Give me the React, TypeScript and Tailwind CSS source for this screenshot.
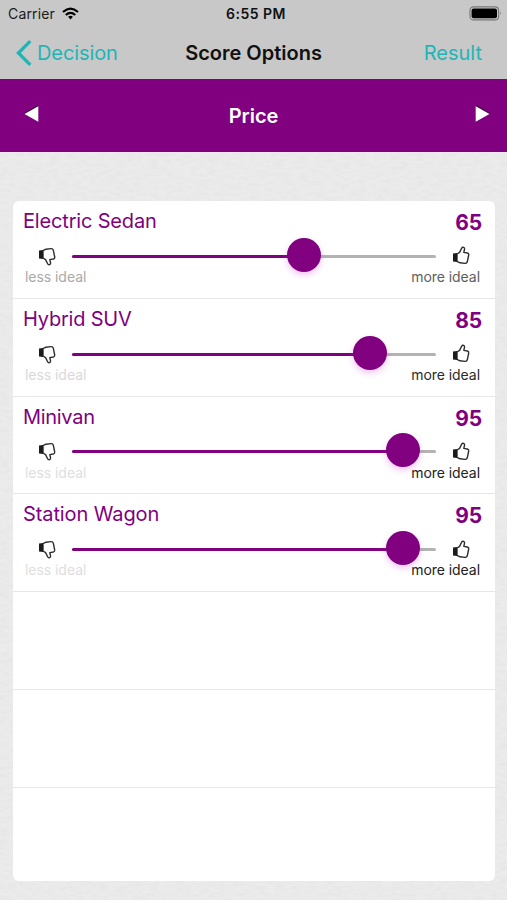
const options = [
  { name: 'Electric Sedan', score: 65, less: 'text-[#a9a9a9]', more: 'text-[#5e5e5e]', spacing: 'tracking-[-0.17px]' },
  { name: 'Hybrid SUV', score: 85, less: 'text-[#d9d9d9]', more: 'text-[#2b2b2b]', spacing: 'tracking-[-0.2px]' },
  { name: 'Minivan', score: 95, less: 'text-[#dedede]', more: 'text-[#222222]', spacing: 'tracking-[-0.3px]' },
  { name: 'Station Wagon', score: 95, less: 'text-[#dedede]', more: 'text-[#222222]', spacing: 'tracking-[-0.1px]' },
];

function Thumb({ down = false }: { down?: boolean }) {
  return (
    <svg viewBox="0 0 18 19" className={down ? 'h-[19px] w-[18px] -scale-y-100' : 'h-[19px] w-[18px]'} fill="none">
      <path
        d="M5 8 L7.6 6.4 L9.6 2.3 Q10.3 .9 11.6 1.3 Q12.9 1.8 12.5 3.5 L11.8 6.4 L15.3 7 Q17 7.4 16.7 9 L15.3 15.8 Q14.8 17.6 13 17.4 L8 16.8 L5 15.4 Z"
        stroke="#2e2e2e"
        strokeWidth="1.4"
        strokeLinejoin="round"
      />
      <path d="M1 7.4 L5 7.1 V16 L1 15.6 Z" fill="#1c1c1c" />
    </svg>
  );
}

function Grain() {
  return (
    <svg className="pointer-events-none absolute inset-0 size-full" aria-hidden="true">
      <filter id="grain">
        <feTurbulence type="fractalNoise" baseFrequency="0.12 0.3" numOctaves="3" seed="4" />
        <feColorMatrix values="0 0 0 0 0.5  0 0 0 0 0.5  0 0 0 0 0.5  0.22 0 0 0 -0.08" />
      </filter>
      <rect width="100%" height="100%" filter="url(#grain)" />
    </svg>
  );
}

function OptionRow({ option }: { option: (typeof options)[number] }) {
  return (
    <div className="h-[97.8px] border-b border-[#e7e7e7] pl-[10px] pr-[13px] pt-[6px]">
      <div className="flex h-[28px] items-start justify-between text-[#800080]">
        <span className={`text-[20px] leading-[28px] ${option.spacing}`}>{option.name}</span>
        <span className="pt-[2px] text-[21px] font-bold leading-[28px] tracking-[-0.2px]">{option.score}</span>
      </div>
      <div className="flex h-[34px] items-center pl-[15px] pr-[12px] pt-[8.6px]">
        <Thumb down />
        <div className="relative ml-[16px] h-[3px] w-[364px] rounded-full bg-[#b3b3b3]">
          <div className="h-full rounded-full bg-[#800080]" style={{ width: 17 + option.score * 3.3 }} />
          <div
            className="absolute -top-[17px] size-[34px] rounded-full bg-[#800080] shadow-[0_3px_6px_rgba(200,60,200,0.3)]"
            style={{ left: option.score * 3.3 }}
          />
        </div>
        <div className="mb-[1px] ml-[16px]">
          <Thumb />
        </div>
      </div>
      <div className="flex justify-between px-[2px] text-[14px] leading-[16px] tracking-[-0.05px]">
        <span className={option.less}>less ideal</span>
        <span className={option.more}>more ideal</span>
      </div>
    </div>
  );
}

export default function App() {
  return (
    <div className="relative h-[900px] w-[507px] overflow-hidden bg-[#ebebeb] font-['Inter',sans-serif]">
      <Grain />
      <div className="relative">
        <header className="h-[79px] bg-[#c8c8c8]">
          <div className="grid h-[27px] grid-cols-[1fr_auto_1fr] items-center pl-[8px] pr-[5px]">
            <div className="flex items-center gap-[7px] text-[14px] tracking-[0.15px] text-[#1b1b1b]">
              <span>Carrier</span>
              <svg viewBox="0 0 17 13" className="h-[13px] w-[17px]" fill="none" stroke="#000" strokeWidth="2.2">
                <path d="M1 5 Q8.5 -1.8 16 5" />
                <path d="M3.8 8 Q8.5 3.8 13.2 8" />
                <path d="M6.1 9.8 Q8.5 7.8 10.9 9.8 L8.5 12.4 Z" fill="#000" stroke="none" />
              </svg>
            </div>
            <div className="pl-[2px] text-center text-[14px] font-semibold tracking-[0.5px] text-[#111]">6:55 PM</div>
            <svg viewBox="0 0 33 15" className="h-[15px] w-[33px] justify-self-end">
              <rect x="1" y=".9" width="28.6" height="13" rx="3.5" fill="#c8c8c8" stroke="#777" strokeWidth="1.1" />
              <rect x="2.6" y="2.5" width="25.4" height="9.8" rx="2" fill="#000" />
              <path d="M31 5.3 Q32.8 7.4 31 9.5 Z" fill="#777" />
            </svg>
          </div>
          <div className="grid h-[52px] grid-cols-[1fr_auto_1fr] items-center pb-[1px] pl-[16px] pr-[16px] text-[20px]">
            <div className="flex items-center gap-[5px] text-[#1fb5b7]">
              <svg viewBox="0 0 16 26" className="h-[26px] w-[16px]" fill="none" stroke="currentColor" strokeWidth="3.3">
                <path d="M14.3 1.2 L2.4 13 L14.3 24.8" />
              </svg>
              <span className="tracking-[-0.1px]">Decision</span>
            </div>
            <h1 className="font-semibold text-[#111]">Score Options</h1>
            <span className="mr-[9px] justify-self-end text-[#1fb5b7]">Result</span>
          </div>
        </header>
        <div className="flex h-[74px] items-center justify-between border-b border-[#f3e6f3] bg-[#800080] pl-[24px] pr-[16px]">
          <svg viewBox="0 0 16 18" className="-mt-[4px] h-[18px] w-[16px]">
            <path d="M0 8.3 L14 0 V1.5 L2 9.5 Z" fill="#35103a" />
            <path d="M.5 9 L14.3 1.2 V16.8 Z" fill="#fff" />
          </svg>
          <h2 className="-ml-[8px] text-[20px] font-semibold text-white">Price</h2>
          <svg viewBox="0 0 16 18" className="-mt-[4px] h-[18px] w-[16px]">
            <path d="M1 0 L15 8.3 L14 9.5 L1 2 Z" fill="#35103a" />
            <path d="M.7 1.2 L14.5 9 L.7 16.8 Z" fill="#fff" />
          </svg>
        </div>
        <main className="ml-[13px] mt-[48px] h-[680px] w-[482px] overflow-hidden rounded-[6px] bg-white">
          {options.map((option) => (
            <OptionRow key={option.name} option={option} />
          ))}
          <div className="h-[97.8px] border-b border-[#e7e7e7]" />
          <div className="h-[97.8px] border-b border-[#e7e7e7]" />
        </main>
      </div>
    </div>
  );
}
